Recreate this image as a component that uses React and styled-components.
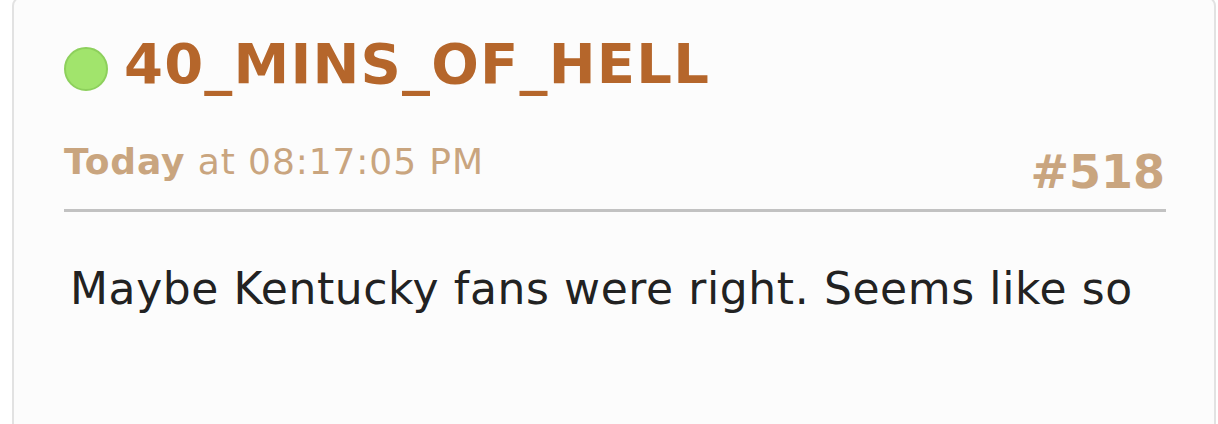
import styled, { createGlobalStyle } from "styled-components";

const GlobalStyle = createGlobalStyle`
  html, body {
    margin: 0;
    padding: 0;
    background: #ffffff;
    font-family: "DejaVu Sans", Verdana, sans-serif;
  }
`;

const Card = styled.article`
  margin: -4px 2px 0 12px;
  min-height: 440px;
  box-sizing: border-box;
  background: #fcfcfc;
  border: 2px solid #e2e2e2;
  border-radius: 10px;
  padding: 33px 48px 0 50px;
`;

const Header = styled.div`
  display: flex;
  align-items: center;
  gap: 16px;
`;

const Status = styled.span`
  flex-shrink: 0;
  width: 40px;
  height: 40px;
  margin-top: 10px;
  border-radius: 50%;
  background: #a1e46c;
  border: 2px solid #8dd05c;
`;

const Username = styled.h2`
  margin: 0;
  font-size: 56px;
  line-height: 66px;
  letter-spacing: 1.2px;
  font-weight: bold;
  color: #b5662b;
`;

const Meta = styled.div`
  display: flex;
  justify-content: space-between;
  align-items: flex-end;
  margin-top: 49px;
  padding-bottom: 11px;
  border-bottom: 3px solid #c2c2c2;
  color: #c9a57f;
`;

const Time = styled.span`
  font-size: 36px;
  line-height: 40px;
  letter-spacing: 0.9px;
  align-self: flex-start;
  margin-top: -4px;

  b {
    font-weight: bold;
  }
`;

const PostNumber = styled.span`
  font-size: 46px;
  line-height: 52px;
  font-weight: bold;
  margin-right: 1px;
`;

const Body = styled.p`
  margin: 51px 0 0 6px;
  font-size: 44px;
  line-height: 52px;
  letter-spacing: 0.6px;
  color: #222222;
`;

export default function App() {
  return (
    <>
      <GlobalStyle />
      <Card>
        <Header>
          <Status />
          <Username>40_MINS_OF_HELL</Username>
        </Header>
        <Meta>
          <Time>
            <b>Today</b> at 08:17:05 PM
          </Time>
          <PostNumber>#518</PostNumber>
        </Meta>
        <Body>Maybe Kentucky fans were right. Seems like so</Body>
      </Card>
    </>
  );
}
